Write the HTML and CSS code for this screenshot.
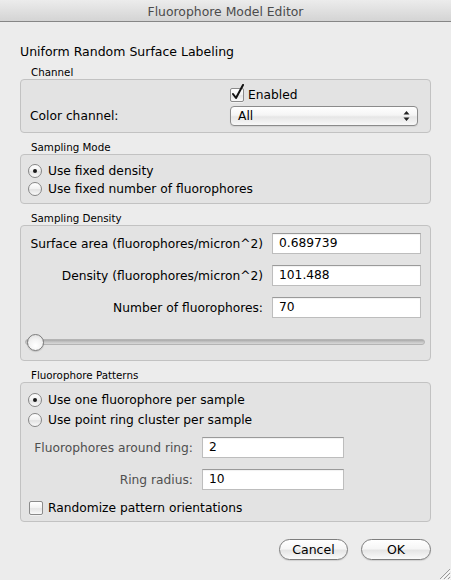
FILE: index.html
```html
<!DOCTYPE html>
<html>
<head>
<meta charset="utf-8">
<link rel="stylesheet" href="styles.css">
</head>
<body>
<div class="window">
  <div class="titlebar">Fluorophore Model Editor</div>
  <div class="content">
    <h1 class="heading">Uniform Random Surface Labeling</h1>

    <section class="group">
      <div class="group-title">Channel</div>
      <div class="group-box channel-box">
        <label class="check enabled-check">
          <span class="checkbox"><svg width="16" height="18" viewBox="0 0 16 18"><path d="M3 10 L6 14 L13 1" fill="none" stroke="#111" stroke-width="2" stroke-linecap="round" stroke-linejoin="round"/></svg></span>
          <span>Enabled</span>
        </label>
        <span class="field-label left">Color channel:</span>
        <div class="select">
          <span>All</span>
          <svg class="arrows" width="7" height="12" viewBox="0 0 7 12"><path d="M3.5 1 L6.5 4.5 L0.5 4.5 Z M3.5 11 L6.5 7.5 L0.5 7.5 Z" fill="#222"/></svg>
        </div>
      </div>
    </section>

    <section class="group">
      <div class="group-title">Sampling Mode</div>
      <div class="group-box mode-box">
        <label class="option"><span class="radio on"></span><span>Use fixed density</span></label>
        <label class="option"><span class="radio"></span><span>Use fixed number of fluorophores</span></label>
      </div>
    </section>

    <section class="group">
      <div class="group-title">Sampling Density</div>
      <div class="group-box density-box">
        <div class="form-grid density-grid">
          <span class="field-label">Surface area (fluorophores/micron^2)</span>
          <div class="textfield">0.689739</div>
          <span class="field-label">Density (fluorophores/micron^2)</span>
          <div class="textfield">101.488</div>
          <span class="field-label">Number of fluorophores:</span>
          <div class="textfield">70</div>
        </div>
        <div class="slider">
          <div class="track"></div>
          <div class="knob"></div>
        </div>
      </div>
    </section>

    <section class="group">
      <div class="group-title">Fluorophore Patterns</div>
      <div class="group-box patterns-box">
        <label class="option tall"><span class="radio on"></span><span>Use one fluorophore per sample</span></label>
        <label class="option tall"><span class="radio"></span><span>Use point ring cluster per sample</span></label>
        <div class="form-grid ring-grid">
          <span class="field-label dim">Fluorophores around ring:</span>
          <div class="textfield">2</div>
          <span class="field-label dim">Ring radius:</span>
          <div class="textfield">10</div>
        </div>
        <label class="check random-check">
          <span class="checkbox"></span>
          <span>Randomize pattern orientations</span>
        </label>
      </div>
    </section>

    <div class="footer">
      <button class="btn cancel">Cancel</button>
      <button class="btn ok">OK</button>
    </div>
  </div>
  <svg class="grip" width="12" height="12" viewBox="0 0 12 12">
    <path d="M11 1 L1 11 M11 5 L5 11 M11 9 L9 11" stroke="#9a9a9a" stroke-width="1"/>
    <path d="M12 2 L2 12 M12 6 L6 12 M12 10 L10 12" stroke="#fafafa" stroke-width="1"/>
  </svg>
</div>
</body>
</html>
```

FILE: styles.css
```css
* { box-sizing: border-box; }

html, body {
  margin: 0;
  padding: 0;
}

body {
  font-family: "DejaVu Sans", "Noto Sans", sans-serif;
  font-size: 12.25px;
  color: #000;
  background: #ececec;
}

.window {
  position: relative;
  width: 451px;
  height: 580px;
  overflow: hidden;
  background: #ececec;
  display: flex;
  flex-direction: column;
}

.titlebar {
  height: 22px;
  flex: none;
  background: linear-gradient(#ececec, #d4d4d4);
  border-bottom: 1px solid #868686;
  text-align: center;
  font-size: 12.4px;
  line-height: 21px;
  padding-top: 1px;
  color: #4b4b4b;
}

.content {
  padding: 0 20px;
  flex: 1;
  display: flex;
  flex-direction: column;
}

.heading {
  margin: 22px 0 6px;
  font-size: 12.5px;
  font-weight: normal;
  line-height: 16px;
}

.group + .group { margin-top: 8px; }

.group-title {
  font-size: 10.3px;
  line-height: 12px;
  padding-left: 11px;
  margin-bottom: 1px;
}

.group-box {
  border: 1px solid #c2c2c2;
  border-radius: 4px;
  background: #e3e3e3;
}

/* Channel */
.channel-box {
  display: grid;
  grid-template-columns: 200px 188px;
  grid-template-rows: 16px 20px;
  row-gap: 3px;
  padding: 7px 0 6px 9px;
  align-items: center;
}

.enabled-check { grid-column: 2; }

.check {
  display: flex;
  align-items: center;
  gap: 4px;
  line-height: 16px;
}

.checkbox {
  position: relative;
  width: 14px;
  height: 14px;
  flex: none;
  border: 1px solid #8a8a8a;
  border-radius: 2px;
  background: linear-gradient(#ffffff, #f1f1f1 50%, #e4e4e4 55%, #f9f9f9);
  box-shadow: 0 1px 0 rgba(255,255,255,0.5);
}

.checkbox svg {
  position: absolute;
  left: -1px;
  top: -5px;
}

.select {
  height: 20px;
  border: 1px solid #8b8b8b;
  border-radius: 4px;
  background: linear-gradient(#ffffff, #f5f5f5 45%, #e6e6e6 55%, #f8f8f8);
  box-shadow: 0 1px 1px rgba(0,0,0,0.08);
  display: flex;
  align-items: center;
  justify-content: space-between;
  padding: 0 7px 0 7px;
  line-height: 18px;
}

/* radio options */
.mode-box { padding: 7px 0 5px 7px; }

.option {
  display: flex;
  align-items: center;
  gap: 6px;
  height: 18px;
}

.option.tall { height: 20px; }

.radio {
  position: relative;
  width: 14px;
  height: 14px;
  flex: none;
  border: 1px solid #868686;
  border-radius: 50%;
  background: linear-gradient(#ffffff, #f0f0f0 50%, #e2e2e2 55%, #fafafa);
}

.radio.on::after {
  content: "";
  position: absolute;
  left: 4px;
  top: 4px;
  width: 4px;
  height: 4px;
  border-radius: 50%;
  background: #1a1a1a;
}

/* form grids */
.form-grid {
  display: grid;
  column-gap: 9px;
  row-gap: 11px;
  align-items: center;
}

.field-label {
  white-space: nowrap;
  text-align: right;
}

.field-label.left { text-align: left; }
.field-label.dim { color: #4f4f4f; }

.textfield {
  height: 21px;
  background: #fff;
  border: 1px solid #bdbdbd;
  border-top-color: #9a9a9a;
  box-shadow: inset 0 1px 1px rgba(0,0,0,0.06);
  padding: 0 6px;
  line-height: 19px;
}

.density-box { padding: 7px 0 9px; }

.density-grid {
  grid-template-columns: minmax(0, 1fr) 149px;
  padding: 0 9px 0 7px;
}

.slider {
  position: relative;
  height: 17px;
  margin: 16px 5px 0 4px;
}

.track {
  position: absolute;
  left: 0;
  right: 0;
  top: 5px;
  height: 6px;
  border-radius: 3px;
  background: linear-gradient(#a9a9a9, #c6c6c6 50%, #d8d8d8);
  border: 1px solid #b4b4b4;
}

.knob {
  position: absolute;
  left: 2px;
  top: 0;
  width: 17px;
  height: 17px;
  border-radius: 50%;
  border: 1px solid #7b7b7b;
  background: radial-gradient(circle at 50% 70%, #ffffff, #f2f2f2 50%, #d9d9d9);
  box-shadow: 0 1px 1px rgba(0,0,0,0.15);
}

/* patterns */
.patterns-box { padding: 7px 0 6px 7px; }

.ring-grid {
  grid-template-columns: 163px 142px;
  margin-top: 7px;
  padding-left: 2px;
}

.random-check {
  margin-top: 11px;
  line-height: 14px;
  gap: 5px;
  padding-left: 1px;
}

/* footer */
.footer {
  display: flex;
  justify-content: flex-end;
  gap: 13px;
  margin-top: 17px;
}

.btn {
  height: 21px;
  border: 1px solid #7d7d7d;
  border-radius: 11px;
  background: linear-gradient(#ffffff, #f6f6f6 45%, #e5e5e5 55%, #fafafa);
  box-shadow: 0 1px 1px rgba(0,0,0,0.12);
  font-family: "DejaVu Sans", "Noto Sans", sans-serif;
  font-size: 12.5px;
  color: #000;
  padding: 0;
  line-height: 19px;
}

.btn.cancel { width: 69px; }
.btn.ok { width: 70px; }

.grip {
  position: absolute;
  right: 0;
  bottom: 0;
}
```
